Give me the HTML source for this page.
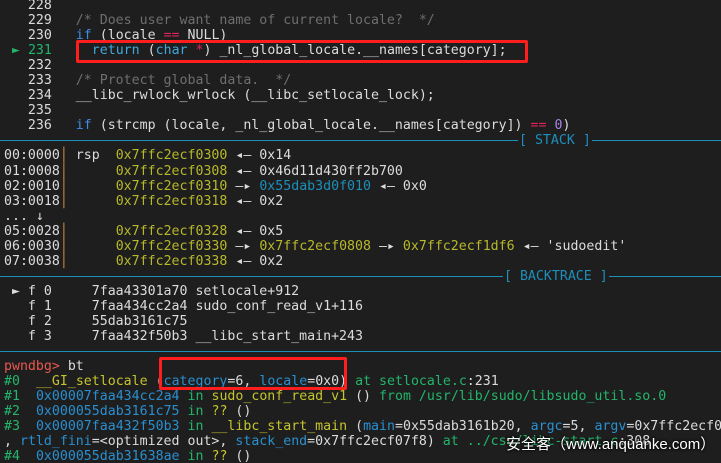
<!DOCTYPE html>
<html><head><meta charset="utf-8">
<style>
html,body{margin:0;padding:0;background:#1e1e1e;width:721px;height:463px;overflow:hidden;position:relative}
#t{position:absolute;left:4px;top:-2px;font-family:"DejaVu Sans Mono","Liberation Mono",monospace;font-size:13.25px;line-height:15.05px;color:#dcdcdc}
.r{height:15.05px;position:relative;white-space:pre}
.c{color:#6e6e6e}.k{color:#3b8eea}.k2{color:#3fa9de}.op{color:#e0245e}.n{color:#a883e8}
.g{color:#23b56b}.y{color:#b8b82c}.cy{color:#1d8fba}.b{color:#2a8fd0}.o{color:#d08840}.rd{color:#e8574f}.yl{color:#c6c42e}
.sep{position:absolute;left:-4px;width:721px;height:1px;background:#1a8fb8;top:7px}
.lab{position:absolute;top:0;background:#1e1e1e;color:#1d8fba;padding:0 1px}
.box{position:absolute;border:3px solid #ff1e1e;border-radius:2px}
.wm{position:absolute;left:506px;top:433px;font-family:"Liberation Sans","Noto Sans CJK SC",sans-serif;font-size:15px;color:#fff;text-shadow:0 0 3px #000,0 0 2px #000}
</style></head><body>
<div id="t"><div class="r">   228</div><div class="r">   229   <span class="c">/* Does user want name of current locale?  */</span></div><div class="r">   230   <span class="k">if</span> (locale <span class="op">==</span> NULL)</div><div class="r"> <span class="g">► 231</span>     <span class="k2">return</span> (<span class="k2">char</span> <span class="op">*</span>) _nl_global_locale.__names[category];</div><div class="r">   232</div><div class="r">   233   <span class="c">/* Protect global data.  */</span></div><div class="r">   234   __libc_rwlock_wrlock (__libc_setlocale_lock);</div><div class="r">   235</div><div class="r">   236   <span class="k">if</span> (strcmp (locale, _nl_global_locale.__names[category]) <span class="op">==</span> <span class="n">0</span>)</div><div class="r"><div class="sep"></div><span class="lab" style="left:514px">[ STACK ]</span></div><div class="r">00:0000<span class="o">│</span> rsp  <span class="y">0x7ffc2ecf0300</span> ◂— 0x14</div><div class="r">01:0008<span class="o">│</span>      <span class="y">0x7ffc2ecf0308</span> ◂— 0x46d11d430ff2b700</div><div class="r">02:0010<span class="o">│</span>      <span class="y">0x7ffc2ecf0310</span> —▸ <span class="cy">0x55dab3d0f010</span> ◂— 0x0</div><div class="r">03:0018<span class="o">│</span>      <span class="y">0x7ffc2ecf0318</span> ◂— 0x2</div><div class="r">... ↓</div><div class="r">05:0028<span class="o">│</span>      <span class="y">0x7ffc2ecf0328</span> ◂— 0x5</div><div class="r">06:0030<span class="o">│</span>      <span class="y">0x7ffc2ecf0330</span> —▸ <span class="y">0x7ffc2ecf0808</span> —▸ <span class="y">0x7ffc2ecf1df6</span> ◂— 'sudoedit'</div><div class="r">07:0038<span class="o">│</span>      <span class="y">0x7ffc2ecf0338</span> ◂— 0x2</div><div class="r"><div class="sep"></div><span class="lab" style="left:499px">[ BACKTRACE ]</span></div><div class="r"> ► f 0     7faa43301a70 setlocale+912</div><div class="r">   f 1     7faa434cc2a4 sudo_conf_read_v1+116</div><div class="r">   f 2     55dab3161c75</div><div class="r">   f 3     7faa432f50b3 __libc_start_main+243</div><div class="r"><div class="sep"></div></div><div class="r"><span class="rd">pwndbg&gt;</span> bt</div><div class="r"><span class="g">#0</span>  <span class="yl">__GI_setlocale</span> (<span class="b">category</span>=6, <span class="b">locale</span>=0x0) <span class="g">at</span> <span class="g">setlocale.c</span>:231</div><div class="r"><span class="g">#1</span>  <span class="b">0x00007faa434cc2a4</span> <span class="g">in</span> <span class="yl">sudo_conf_read_v1</span> () <span class="g">from</span> <span class="g">/usr/lib/sudo/libsudo_util.so.0</span></div><div class="r"><span class="g">#2</span>  <span class="b">0x000055dab3161c75</span> <span class="g">in</span> <span class="yl">??</span> ()</div><div class="r"><span class="g">#3</span>  <span class="b">0x00007faa432f50b3</span> <span class="g">in</span> <span class="yl">__libc_start_main</span> (<span class="b">main</span>=0x55dab3161b20, <span class="b">argc</span>=5, <span class="b">argv</span>=0x7ffc2ecf0</div><div class="r">, <span class="b">rtld_fini</span>=&lt;optimized out&gt;, <span class="b">stack_end</span>=0x7ffc2ecf07f8) <span class="g">at</span> <span class="g">../csu/libc-start.c</span>:308</div><div class="r"><span class="g">#4</span>  <span class="b">0x000055dab31638ae</span> <span class="g">in</span> <span class="yl">??</span> ()</div></div>
<div class="box" style="left:76px;top:40px;width:446px;height:17px"></div>
<div class="box" style="left:159px;top:357px;width:182px;height:27px"></div>
<div class="wm">安全客（www.anquanke.com）</div>
</body></html>
